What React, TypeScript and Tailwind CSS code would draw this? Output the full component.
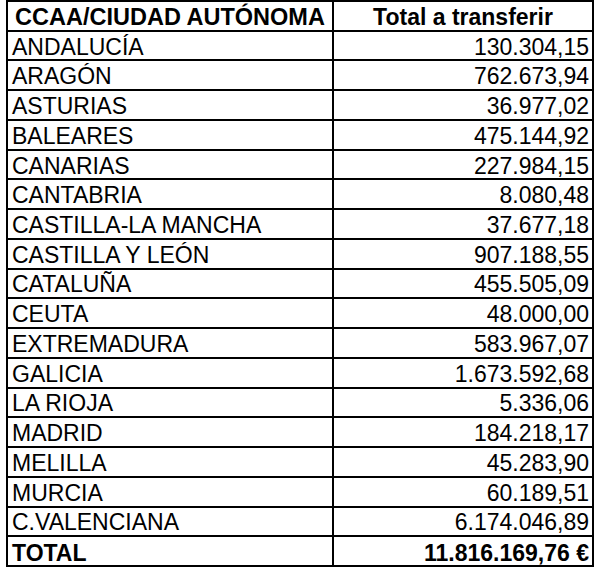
const rows: [string, string][] = [
  ["ANDALUCÍA", "130.304,15"],
  ["ARAGÓN", "762.673,94"],
  ["ASTURIAS", "36.977,02"],
  ["BALEARES", "475.144,92"],
  ["CANARIAS", "227.984,15"],
  ["CANTABRIA", "8.080,48"],
  ["CASTILLA-LA MANCHA", "37.677,18"],
  ["CASTILLA Y LEÓN", "907.188,55"],
  ["CATALUÑA", "455.505,09"],
  ["CEUTA", "48.000,00"],
  ["EXTREMADURA", "583.967,07"],
  ["GALICIA", "1.673.592,68"],
  ["LA RIOJA", "5.336,06"],
  ["MADRID", "184.218,17"],
  ["MELILLA", "45.283,90"],
  ["MURCIA", "60.189,51"],
  ["C.VALENCIANA", "6.174.046,89"],
];

export default function App() {
  return (
    <div className="w-[600px] h-[573px] bg-white" style={{ fontFamily: '"Liberation Sans", Arial, sans-serif' }}>
      <div className="ml-[6px] w-[588px] h-[567px] border-t-2 border-x-2 border-black grid grid-rows-[repeat(19,minmax(0,1fr))] text-[23px] leading-none text-black">
        <div className="grid grid-cols-[326px_1fr] border-b-2 border-black font-bold">
          <div className="border-r-2 border-black flex items-center justify-center pt-[4px] text-[23.5px]">CCAA/CIUDAD AUTÓNOMA</div>
          <div className="flex items-center justify-center pt-[4px]">Total a transferir</div>
        </div>
        {rows.map(([name, amount]) => (
          <div key={name} className="grid grid-cols-[326px_1fr] border-b-2 border-black">
            <div className="border-r-2 border-black flex items-center pl-[4px] pt-[3px]">{name}</div>
            <div className="flex items-center justify-end pr-[3px] pt-[3px]">{amount}</div>
          </div>
        ))}
        <div className="grid grid-cols-[326px_1fr] border-b-2 border-black font-bold">
          <div className="border-r-2 border-black flex items-center pl-[4px] pt-[4px]">TOTAL</div>
          <div className="flex items-center justify-end pr-[3px] pt-[4px]">11.816.169,76 €</div>
        </div>
      </div>
    </div>
  );
}
